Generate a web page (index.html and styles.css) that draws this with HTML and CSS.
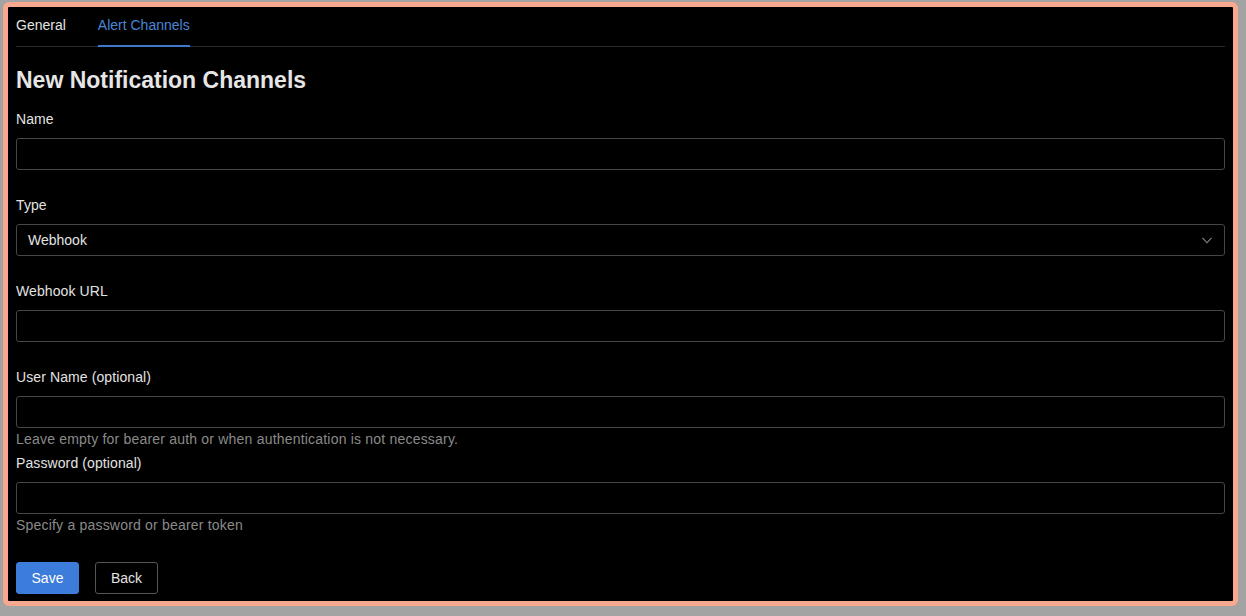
FILE: index.html
```html
<!DOCTYPE html>
<html lang="en">
<head>
<meta charset="utf-8">
<title>New Notification Channels</title>
<link rel="stylesheet" href="styles.css">
</head>
<body>
<div class="frame">
  <div class="panel">
    <nav class="tabs">
      <a class="tab">General</a>
      <a class="tab active">Alert Channels</a>
    </nav>
    <h1 class="title">New Notification Channels</h1>
    <form class="form">
      <div class="field">
        <label class="label">Name</label>
        <input class="control" type="text">
      </div>
      <div class="field">
        <label class="label">Type</label>
        <div class="control select">
          <span>Webhook</span>
          <svg class="chevron" width="10" height="7" viewBox="0 0 10 7"><path d="M0.5 0.8 L5 5.8 L9.5 0.8" fill="none" stroke="#8a8a8a" stroke-width="1.1"/></svg>
        </div>
      </div>
      <div class="field">
        <label class="label">Webhook URL</label>
        <input class="control" type="text">
      </div>
      <div class="field with-help">
        <label class="label">User Name (optional)</label>
        <input class="control" type="text">
        <div class="help">Leave empty for bearer auth or when authentication is not necessary.</div>
      </div>
      <div class="field with-help">
        <label class="label">Password (optional)</label>
        <input class="control" type="password">
        <div class="help">Specify a password or bearer token</div>
      </div>
      <div class="actions">
        <button type="button" class="btn primary">Save</button>
        <button type="button" class="btn secondary">Back</button>
      </div>
    </form>
  </div>
</div>
</body>
</html>
```

FILE: styles.css
```css
* { box-sizing: border-box; }
html, body { margin: 0; height: 100%; }
body {
  background: #a3a3a3;
  font-family: "Liberation Sans", Arial, sans-serif;
  font-size: 14px;
  color: #e3e3e3;
}
.frame {
  height: 616px;
  padding: 2px 8px 10px 3px;
  display: flex;
}
.panel {
  flex: 1;
  background: #000;
  border: 5px solid #f8a88f;
  border-radius: 6px;
  padding: 8px;
  overflow: hidden;
}
.tabs {
  display: flex;
  gap: 32px;
  align-items: flex-end;
  border-bottom: 1px solid #2a2a2a;
}
.tab {
  line-height: 20px;
  padding-bottom: 10px;
  border-bottom: 2px solid transparent;
  margin-bottom: -1px;
  color: #e3e3e3;
}
.tab.active {
  color: #4a86d8;
  border-bottom-color: #3f78c8;
}
.title {
  margin: 18px 0 14px;
  font-size: 23px;
  line-height: 30px;
  font-weight: bold;
  color: #e6e6e6;
}
.form { margin: 0; }
.field { margin-bottom: 25px; }
.field.with-help { margin-bottom: 4px; }
.label {
  display: block;
  line-height: 20px;
  margin-bottom: 9px;
  letter-spacing: 0.1px;
}
.control {
  display: block;
  width: 100%;
  height: 32px;
  background: #000;
  border: 1px solid #464646;
  border-radius: 3px;
  color: #e3e3e3;
  font: inherit;
  padding: 0 11px;
  margin: 0;
}
.select {
  display: flex;
  align-items: center;
  justify-content: space-between;
}
.chevron { margin-right: 1px; }
.help {
  margin-top: 1px;
  line-height: 20px;
  color: #8a8a8a;
  letter-spacing: 0.2px;
}
.actions {
  margin-top: 27px;
  display: flex;
  gap: 16px;
}
.btn {
  width: 63px;
  height: 32px;
  border-radius: 3px;
  font: inherit;
  font-size: 14px;
  padding: 0;
  cursor: pointer;
}
.primary {
  background: #3c7cda;
  border: 1px solid #3c7cda;
  color: #fff;
}
.secondary {
  background: #000;
  border: 1px solid #555;
  color: #e3e3e3;
}
```
